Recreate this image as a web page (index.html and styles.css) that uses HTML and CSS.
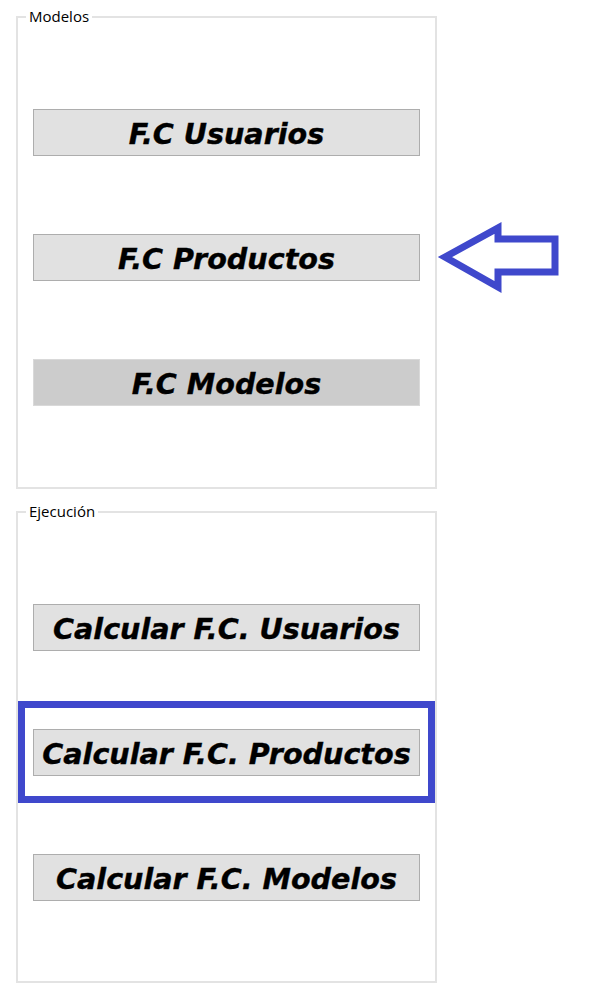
FILE: index.html
```html
<!DOCTYPE html>
<html lang="es">
<head>
<meta charset="utf-8">
<title>Modelos</title>
<link rel="stylesheet" href="styles.css">
</head>
<body>
<div class="page">
  <fieldset class="group">
    <legend class="group-title">Modelos</legend>
    <div class="group-body">
      <button class="btn">F.C Usuarios</button>
      <div class="btn-wrap">
        <button class="btn">F.C Productos</button>
        <svg class="arrow" width="130" height="80" viewBox="437 220 130 80" aria-hidden="true">
          <polygon points="445,257 498,228 498,239 555,239 555,272 498,272 498,287" fill="none" stroke="#3f48cc" stroke-width="7" stroke-linejoin="miter" stroke-miterlimit="4"/>
        </svg>
      </div>
      <button class="btn btn-pressed">F.C Modelos</button>
    </div>
  </fieldset>
  <fieldset class="group group-exec">
    <legend class="group-title">Ejecución</legend>
    <div class="group-body">
      <button class="btn">Calcular F.C. Usuarios</button>
      <div class="btn-wrap highlighted">
        <button class="btn">Calcular F.C. Productos</button>
      </div>
      <button class="btn">Calcular F.C. Modelos</button>
    </div>
  </fieldset>
</div>
</body>
</html>
```
FILE: styles.css
```css
html, body {
  margin: 0;
  padding: 0;
  background: #ffffff;
}

.page {
  padding: 9px 0 0 16px;
  width: 421px;
  display: flex;
  flex-direction: column;
  gap: 15px;
}

.group {
  margin: 0;
  padding: 0 15px;
  border: 2px solid #e3e3e3;
  min-width: 0;
}

.group-title {
  margin-left: -7px;
  padding: 0 3px;
  font-family: "Open Sans", "Noto Sans", sans-serif;
  font-size: 15px;
  line-height: 15px;
  color: #000000;
}

.group-body {
  display: flex;
  flex-direction: column;
  padding: 85px 0 81px;
  gap: 78px;
}

.group-exec .group-body {
  padding-bottom: 80px;
}

.btn-wrap {
  position: relative;
  display: flex;
  flex-direction: column;
}

.btn {
  display: block;
  width: 387px;
  height: 47px;
  margin: 0;
  padding: 3px 0 0;
  border: 1px solid #adadad;
  background: #e1e1e1;
  font-family: "DejaVu Sans", Verdana, sans-serif;
  font-weight: bold;
  font-style: italic;
  font-size: 28.6px;
  line-height: 30px;
  color: #000000;
  text-align: center;
  -webkit-text-stroke: 0.4px #000000;
}

.btn-pressed {
  background: #cccccc;
  border-color: #d9d9d9;
}

.arrow {
  position: absolute;
  left: 404px;
  top: -14px;
  overflow: visible;
}

.highlighted::before {
  content: "";
  position: absolute;
  top: -28px;
  left: -15px;
  right: -15px;
  bottom: -27px;
  border: 7px solid #3f48cc;
  pointer-events: none;
}
```
